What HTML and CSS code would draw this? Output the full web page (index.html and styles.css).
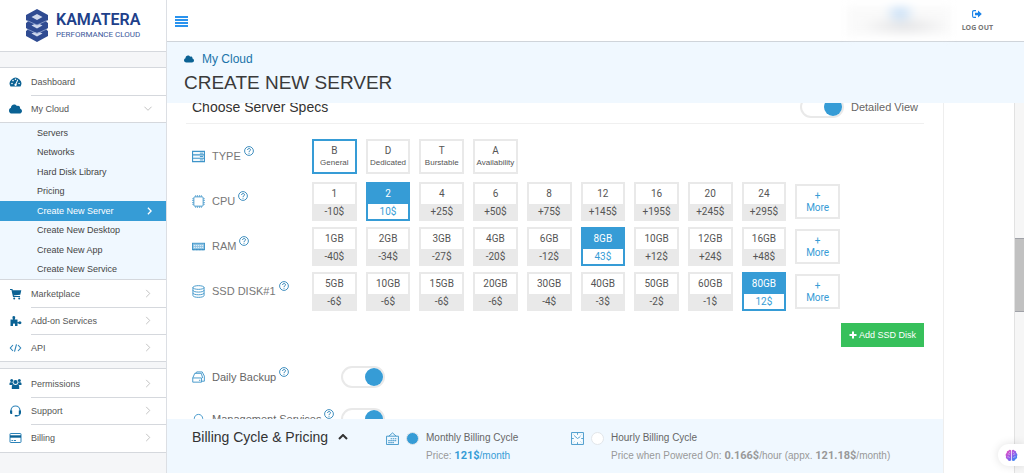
FILE: index.html
```html
<!DOCTYPE html>
<html lang="en">
<head>
<meta charset="utf-8">
<title>Create New Server</title>
<link rel="stylesheet" href="styles.css">
</head>
<body>
<svg class="sprite" aria-hidden="true">
  <symbol id="cloud" viewBox="0 0 640 512"><path fill="currentColor" d="M537.6 226.6c4.1-10.7 6.4-22.4 6.4-34.6 0-53-43-96-96-96-19.7 0-38.1 6-53.3 16.2C367 64.2 315.3 32 256 32c-88.4 0-160 71.6-160 160 0 2.7.1 5.4.2 8.1C40.2 219.8 0 273.2 0 336c0 79.5 64.5 144 144 144h368c70.7 0 128-57.3 128-128 0-61.9-44-113.6-102.4-125.4z"/></symbol>
  <symbol id="chev" viewBox="0 0 6 10"><path d="M1 1l4 4-4 4" fill="none" stroke="currentColor"/></symbol>
  <symbol id="help" viewBox="0 0 10 10"><circle cx="5" cy="5" r="4.4" fill="none" stroke="currentColor" stroke-width=".9"/><path d="M3.600 4c0-2 2.900-1.900 2.900-.2 0 1.100-1.500 1-1.500 2.200M5 6.800v.9" fill="none" stroke="currentColor" stroke-width="1"/></symbol>
</svg>
<div class="app">
  <aside class="sidebar">
    <a class="logo" href="#">
      <svg class="logo-mark" viewBox="0 0 24 34" aria-hidden="true">
        <path d="M12 1l11 6v5l-2 1.500 2 1.500v5l-2 1.500 2 1.500v5l-11 6-11-6v-5l2-1.500-2-1.500v-5l2-1.500L1 12V7z" fill="#2f4b92"/>
        <path d="M6.500 9L12 6l5.500 3-5.500 3zM6.500 17.500l3-1.600 2.500 1.200 2.500-1.200 3 1.600-5.500 3zM6.500 25.500l3-1.600 2.500 1.200 2.500-1.200 3 1.600-5.500 3z" fill="#cfd8ec"/>
        <path d="M2 12.500l10 4.500 10-4.500M2 21l10 4.500L22 21" fill="none" stroke="#8fa3cf" stroke-width=".8"/>
      </svg>
      <span class="logo-text"><strong>KAMATERA</strong><span>PERFORMANCE CLOUD</span></span>
    </a>
    <nav class="menu">
      <a class="item" href="#"><svg class="ico" viewBox="0 0 12 12" aria-hidden="true"><path d="M1 10.500a5.800 5.800 0 1 1 10 0z" fill="#0b6294"/><g fill="#fff"><circle cx="2.500" cy="7.500" r=".8"/><circle cx="3.500" cy="4.600" r=".8"/><circle cx="6" cy="3.300" r=".8"/><circle cx="9.600" cy="7.500" r=".8"/><path d="M7.900 3.600l.8.400-1.700 4a1.200 1.200 0 1 1-.9-.4z"/></g></svg><span>Dashboard</span></a>
      <a class="item" href="#"><svg class="ico" aria-hidden="true"><use href="#cloud"/></svg><span>My Cloud</span><svg class="arrow down" aria-hidden="true"><use href="#chev"/></svg></a>
      <div class="sub">
        <a href="#">Servers</a>
        <a href="#">Networks</a>
        <a href="#">Hard Disk Library</a>
        <a href="#">Pricing</a>
        <a class="current" href="#" aria-current="page">Create New Server<svg class="sub-arrow" viewBox="0 0 6 10" aria-hidden="true"><path d="M1 1l4 4-4 4" fill="none" stroke="#fff" stroke-width="1.600"/></svg></a>
        <a href="#">Create New Desktop</a>
        <a href="#">Create New App</a>
        <a href="#">Create New Service</a>
      </div>
      <a class="item" href="#"><svg class="ico" viewBox="0 0 12 12" aria-hidden="true"><path d="M.5 1.500h2l1.500 7h6.500" fill="none" stroke="#0b6294" stroke-width="1.200"/><path d="M2.800 2.300h9l-1 4.400-7 .8z" fill="#0b6294"/><circle cx="4.700" cy="10.500" r="1" fill="#0b6294"/><circle cx="9.700" cy="10.500" r="1" fill="#0b6294"/></svg><span>Marketplace</span><svg class="arrow" aria-hidden="true"><use href="#chev"/></svg></a>
      <a class="item" href="#"><svg class="ico" viewBox="0 0 12 12" aria-hidden="true"><path d="M1 4.500h2.500C2.400 2 3 1 4.300 1s2 1 .9 3.500H8v2.700c1.200.2 1.200-1 2.400-1 2 0 2 3 0 3-1.200 0-1.200-1-2.400-.8v2.600H5.500C5.800 9 5.300 8.500 4.500 8.500S3.300 9 3.500 11H1z" fill="#0b6294"/></svg><span>Add-on Services</span><svg class="arrow" aria-hidden="true"><use href="#chev"/></svg></a>
      <a class="item" href="#"><svg class="ico" viewBox="0 0 12 12" aria-hidden="true"><path d="M3.500 3L.8 6l2.700 3M8.500 3l2.700 3-2.700 3M7 2.300L5 9.700" fill="none" stroke="#2b82b8" stroke-width="1.100"/></svg><span>API</span><svg class="arrow" aria-hidden="true"><use href="#chev"/></svg></a>
    </nav>
    <nav class="menu second">
      <a class="item" href="#"><svg class="ico" viewBox="0 0 12 12" aria-hidden="true"><g fill="#0b6294"><circle cx="2.200" cy="2.500" r="1.500"/><circle cx="9.800" cy="2.500" r="1.500"/><circle cx="6" cy="4" r="2.100"/><path d="M0 7V5.500c0-1 1-1.300 3.200-1.100.2 1 .7 1.500.9 2L2 7zM12 7V5.500c0-1-1-1.300-3.200-1.100-.2 1-.7 1.500-.9 2L10 7zM2.300 11V8.500c0-1.500 1-2 2-2l1.700.6 1.700-.6c1 0 2 .5 2 2V11z"/></g></svg><span>Permissions</span><svg class="arrow" aria-hidden="true"><use href="#chev"/></svg></a>
      <a class="item" href="#"><svg class="ico" viewBox="0 0 12 12" aria-hidden="true"><path d="M1.500 6.500V5.500a4.500 4.500 0 0 1 9 0v3q0 2-3 2.300" fill="none" stroke="#2b82b8" stroke-width="1.200"/><path d="M.5 5.500h2.200V9H1.600Q.5 9 .5 7.500zM11.500 5.500H9.300V9h1.100q1.100 0 1.100-1.500zM5.300 10h2.400v1.600H5.300z" fill="#0b6294"/></svg><span>Support</span><svg class="arrow" aria-hidden="true"><use href="#chev"/></svg></a>
      <a class="item" href="#"><svg class="ico" viewBox="0 0 12 12" aria-hidden="true"><rect x=".5" y="1.500" width="11" height="9" rx=".6" fill="#fff" stroke="#2b82b8"/><path d="M.5 3.300h11v2.400H.5z" fill="#0b6294"/><path d="M2 8.500h1.400M4.300 8.500h2.200" stroke="#2b82b8"/></svg><span>Billing</span><svg class="arrow" aria-hidden="true"><use href="#chev"/></svg></a>
    </nav>
  </aside>

  <div class="main">
    <header class="topbar">
      <button class="burger" type="button" aria-label="Toggle menu"><i></i><i></i><i></i><i></i></button>
      <div class="account" aria-hidden="true"></div>
      <a class="logout" href="#"><svg viewBox="0 0 10 8" aria-hidden="true"><path d="M4 .6H2Q.6.600.6 2v4Q.6 7.400 2 7.400h2" fill="none" stroke="currentColor" stroke-width="1.100"/><path d="M3 2.700h3V.6L9.800 4 6 7.400V5.300H3z" fill="currentColor"/></svg><span>LOG OUT</span></a>
    </header>
    <div class="heading">
      <a class="crumb" href="#"><svg aria-hidden="true"><use href="#cloud"/></svg>My Cloud</a>
      <h1>CREATE NEW SERVER</h1>
    </div>
    <div class="scroller">
      <div class="column">
        <div class="view">
          <form class="panel">
            <div class="panel-head">
              <h2>Choose Server Specs</h2>
              <label class="detail"><input class="switch" type="checkbox" checked>Detailed View</label>
            </div>
            <div class="spec type">
              <div class="spec-name"><svg class="sico" viewBox="0 0 14 14" aria-hidden="true"><path d="M.6 1.500h12.800v11H.6zM.6 5.200h12.800M.6 8.900h12.800" fill="#f3f9fd" stroke="#3f95c9" stroke-width="1.200"/><path d="M8.500 3.400h3.500M8.500 7h3.500M8.500 10.700h3.500" stroke="#3f95c9"/></svg><span>TYPE</span><svg class="help" aria-hidden="true"><use href="#help"/></svg></div>
              <div class="options">
                <button class="kind on" type="button" aria-pressed="true"><b>B</b><small>General</small></button>
                <button class="kind" type="button"><b>D</b><small>Dedicated</small></button>
                <button class="kind" type="button"><b>T</b><small>Burstable</small></button>
                <button class="kind" type="button"><b>A</b><small>Availability</small></button>
              </div>
            </div>
            <div class="spec">
              <div class="spec-name"><svg class="sico" viewBox="0 0 14 14" aria-hidden="true"><rect x="2" y="2" width="10" height="10" rx="1" fill="none" stroke="#3f95c9"/><path d="M3.500 1h7M3.500 13h7M1 3.500v7M13 3.500v7" stroke="#3f95c9" stroke-width="1.200" stroke-dasharray="1 1"/></svg><span>CPU</span><svg class="help" aria-hidden="true"><use href="#help"/></svg></div>
              <div class="options">
                <button class="opt" type="button"><b>1</b><span>-10$</span></button>
                <button class="opt on" type="button" aria-pressed="true"><b>2</b><span>10$</span></button>
                <button class="opt" type="button"><b>4</b><span>+25$</span></button>
                <button class="opt" type="button"><b>6</b><span>+50$</span></button>
                <button class="opt" type="button"><b>8</b><span>+75$</span></button>
                <button class="opt" type="button"><b>12</b><span>+145$</span></button>
                <button class="opt" type="button"><b>16</b><span>+195$</span></button>
                <button class="opt" type="button"><b>20</b><span>+245$</span></button>
                <button class="opt" type="button"><b>24</b><span>+295$</span></button>
                <button class="kind more" type="button"><b>+</b><b>More</b></button>
              </div>
            </div>
            <div class="spec">
              <div class="spec-name"><svg class="sico" viewBox="0 0 14 14" aria-hidden="true"><rect x=".5" y="3.500" width="13" height="7" fill="#8fc3e3" stroke="#3f95c9"/><path d="M2 6h10M2 8h10" stroke="#fff" stroke-width=".8" stroke-dasharray="1.400 .8"/><path d="M1 10.500h12" stroke="#2b82b8" stroke-width="1.200" stroke-dasharray="1 .6"/></svg><span>RAM</span><svg class="help" aria-hidden="true"><use href="#help"/></svg></div>
              <div class="options">
                <button class="opt" type="button"><b>1GB</b><span>-40$</span></button>
                <button class="opt" type="button"><b>2GB</b><span>-34$</span></button>
                <button class="opt" type="button"><b>3GB</b><span>-27$</span></button>
                <button class="opt" type="button"><b>4GB</b><span>-20$</span></button>
                <button class="opt" type="button"><b>6GB</b><span>-12$</span></button>
                <button class="opt on" type="button" aria-pressed="true"><b>8GB</b><span>43$</span></button>
                <button class="opt" type="button"><b>10GB</b><span>+12$</span></button>
                <button class="opt" type="button"><b>12GB</b><span>+24$</span></button>
                <button class="opt" type="button"><b>16GB</b><span>+48$</span></button>
                <button class="kind more" type="button"><b>+</b><b>More</b></button>
              </div>
            </div>
            <div class="spec">
              <div class="spec-name"><svg class="sico" viewBox="0 0 14 14" aria-hidden="true"><g fill="none" stroke="#3f95c9"><ellipse cx="7" cy="2.700" rx="6" ry="2"/><path d="M1 2.700v8.600c0 2.700 12 2.700 12 0V2.700M1 5.600c0 2.700 12 2.700 12 0M1 8.500c0 2.700 12 2.700 12 0"/></g></svg><span>SSD DISK#1</span><svg class="help" aria-hidden="true"><use href="#help"/></svg></div>
              <div class="options">
                <button class="opt" type="button"><b>5GB</b><span>-6$</span></button>
                <button class="opt" type="button"><b>10GB</b><span>-6$</span></button>
                <button class="opt" type="button"><b>15GB</b><span>-6$</span></button>
                <button class="opt" type="button"><b>20GB</b><span>-6$</span></button>
                <button class="opt" type="button"><b>30GB</b><span>-4$</span></button>
                <button class="opt" type="button"><b>40GB</b><span>-3$</span></button>
                <button class="opt" type="button"><b>50GB</b><span>-2$</span></button>
                <button class="opt" type="button"><b>60GB</b><span>-1$</span></button>
                <button class="opt on" type="button" aria-pressed="true"><b>80GB</b><span>12$</span></button>
                <button class="kind more" type="button"><b>+</b><b>More</b></button>
              </div>
            </div>
            <div class="actions"><button class="add" type="button"><svg viewBox="0 0 8 8" aria-hidden="true"><path d="M4 .5v7M.5 4h7" stroke="#fff" stroke-width="2"/></svg>Add SSD Disk</button></div>
            <div class="extra">
              <label class="spec-name" for="backup"><svg class="sico" viewBox="0 0 14 14" aria-hidden="true"><g fill="none" stroke="#3f95c9"><path d="M.8 7.500L3 2.500h7l1.500 5M.8 7.500h9.500v4.500H.8zM4 2.500L5 1h6l2.300 4.500V11H10.500"/><path d="M7.500 10h1.500"/></g></svg><span>Daily Backup</span><svg class="help" aria-hidden="true"><use href="#help"/></svg></label>
              <input class="switch" id="backup" type="checkbox" checked>
            </div>
            <div class="extra">
              <label class="spec-name" for="managed"><svg class="sico" viewBox="0 0 14 14" aria-hidden="true"><path d="M2.500 9V6a4.500 4.500 0 0 1 9 0v3M1 7h2.500v4H1zM10.500 7H13v4h-2.500z" fill="none" stroke="#3f95c9"/></svg><span>Management Services</span><svg class="help" aria-hidden="true"><use href="#help"/></svg></label>
              <input class="switch" id="managed" type="checkbox" checked>
            </div>
          </form>
        </div>
        <footer class="billing">
          <h2>Billing Cycle &amp; Pricing <svg viewBox="0 0 10 6" aria-hidden="true"><path d="M1 5l4-4 4 4" fill="none" stroke="#333" stroke-width="2"/></svg></h2>
          <div class="cycle">
            <svg class="bico" viewBox="0 0 14 14" aria-hidden="true"><path d="M.6 4.500h12.800v9H.6zM3 4.500L7 1l4 3.500" fill="none" stroke="#3f95c9"/><path d="M5 7.200h7M2.500 9.300h9M2.500 11.400h6" stroke="#3f95c9" stroke-width="1.200" stroke-dasharray="1.500 .7"/></svg>
            <input type="radio" name="cycle" id="monthly" checked>
            <label for="monthly">Monthly Billing Cycle</label>
            <p class="blue"><span>Price: </span><b>121$</b>/month</p>
          </div>
          <div class="cycle">
            <svg class="bico" viewBox="0 0 14 14" aria-hidden="true"><path d="M.6.600h12.800v12.800H.6z" fill="#f8fcff" stroke="#3f95c9"/><path d="M7 1v2M7 11v2M1 7h2M11 7h2M3.500 4L7 7l3-2" fill="none" stroke="#3f95c9" stroke-width=".9"/><path d="M3 3l.5.500M11 3l-.5.500M3 11l.5-.5M11 11l-.5-.5" stroke="#3f95c9"/></svg>
            <input type="radio" name="cycle" id="hourly">
            <label for="hourly">Hourly Billing Cycle</label>
            <p>Price when Powered On: <b>0.166$</b>/hour (appx. <b>121.18$</b>/month)</p>
          </div>
        </footer>
      </div>
      <div class="track" aria-hidden="true"><div class="thumb"></div></div>
    </div>
  </div>
</div>
<button class="assistant" type="button" aria-label="Assistant">
  <svg viewBox="0 0 14 14" aria-hidden="true"><defs><linearGradient id="brain" x1="0" y1="0" x2="1" y2="1"><stop offset=".1" stop-color="#e24fc0"/><stop offset=".5" stop-color="#9a5ae8"/><stop offset=".9" stop-color="#2f8df5"/></linearGradient></defs><path fill="url(#brain)" d="M6.600 1.500C6 .4 4.200.5 3.700 1.900 2.200 2 1.600 3.400 2 4.400.6 5 .3 6.700 1.100 7.700c-.6 1.400.2 2.800 1.500 3 .2 1.900 3 2.900 4 1.300zM7.400 1.500C8 .4 9.800.5 10.300 1.900c1.500.1 2.100 1.500 1.700 2.500 1.400.6 1.700 2.300.9 3.300.6 1.400-.2 2.800-1.500 3-.2 1.900-3 2.900-4 1.300z"/><path d="M3 5.500q1.500-.8 2 .8M2.500 8.500q2-.5 2.500 1M11 5.500q-1.500-.8-2 .8M11.500 8.500q-2-.5-2.500 1M5 3v1.500M9 3v1.500" fill="none" stroke="#fff" stroke-width=".6" opacity=".8"/></svg>
</button>
</body>
</html>
```
FILE: styles.css
```css
* { box-sizing: border-box; }
body { margin: 0; background: #fff; color: #555; font: 12px/16px "Liberation Sans", Arial, sans-serif; }
a { color: inherit; text-decoration: none; }
button { font: inherit; color: inherit; padding: 0; margin: 0; background: #fff; border: 0; cursor: pointer; }
h1, h2, p { margin: 0; font-weight: 400; }
b { font-weight: 400; }
svg { display: block; flex: none; }
.sprite { position: absolute; width: 0; height: 0; }

.app { display: flex; height: 100vh; overflow: hidden; }

/* Sidebar */
.sidebar { flex: none; width: 167px; background: #f5f6f8; border-right: 1px solid #dcdfe4; font-size: 9px; line-height: 12px; overflow: hidden; }
.logo { display: flex; align-items: center; gap: 7px; height: 52px; padding: 0 0 1px 25px; background: #fff; border-bottom: 1px solid #d5d8dd; color: #20408a; font-family: Roboto, sans-serif; }
.logo-mark { width: 24px; height: 34px; }
.logo-text { display: grid; gap: 2px; }
.logo-text strong { font-size: 16px; line-height: 16px; font-weight: 600; }
.logo-text span { font-size: 8px; line-height: 9px; color: #3c589b; }
.menu { margin-top: 15px; background: #fff; border: solid #d5d8dd; border-width: 1px 0; }
.menu.second { margin-top: 6px; padding: 1px 0; }
.item { display: flex; align-items: center; height: 27px; padding: 0 12px 0 9px; position: relative; }
.item + .item::before { content: ""; position: absolute; top: 0; left: 31px; right: 0; border-top: 1px solid #d5d8dd; }
.item span { flex: 1; margin-left: 9px; }
.ico { width: 13px; height: 12px; color: #0b6294; }
.arrow { width: 6px; height: 9px; margin-right: 3px; color: #bbb; }
.arrow.down { transform: rotate(90deg); }
.sub { display: grid; grid-auto-rows: 1fr; min-height: 158px; background: #f0f8ff; border: solid #d5d8dd; border-width: 1px 0; color: #444; }
.sub a { display: flex; align-items: center; padding-left: 37px; }
.sub .current { justify-content: space-between; padding-right: 14px; background: #369cd6; color: #fff; }
.sub-arrow { width: 5px; height: 8px; }

/* Header */
.main { flex: 1; min-width: 0; display: flex; flex-direction: column; }
.topbar { display: flex; align-items: center; height: 42px; padding: 0 31px 0 8px; border-bottom: 1px solid #cfd4da; }
.burger { display: grid; gap: 1px; width: 13px; margin-top: 2px; }
.burger i { height: 2px; background: #2a93ee; }
.account { width: 104px; height: 30px; margin: 0 11px 0 auto; filter: blur(4px); background: radial-gradient(ellipse 16px 12px at 51% 22%, #c3ddf7, transparent), radial-gradient(ellipse 46px 10px at 55% 66%, #e2e2e4, transparent), #fafafa; }
.logout { display: grid; justify-items: center; gap: 5px; font: 700 7px/9px "Open Sans", sans-serif; color: #777; }
.logout svg { width: 10px; height: 8px; color: #1a82e8; }
.heading { height: 61px; padding: 9px 17px; background: #f0f8ff; }
.crumb { display: flex; align-items: center; gap: 8px; color: #1a74aa; }
.crumb svg { width: 10px; height: 8px; color: #0b6294; }
.heading h1 { margin-top: 5px; font-size: 19px; line-height: 22px; color: #3a3a3a; }

/* Scrolling area */
.scroller { flex: 1; min-height: 0; display: flex; }
.column { flex: 1; min-width: 0; margin-right: 70px; display: flex; flex-direction: column; border-right: 1px solid #eee; }
.view { flex: 1; min-height: 0; overflow: hidden; }
.panel { margin-top: -8px; padding: 0 19px; }
.panel-head { display: flex; justify-content: space-between; align-items: center; height: 29px; padding: 0 6px 5px 6px; border-bottom: 1px solid #f0f0f0; }
h2 { font-size: 14px; line-height: 18px; color: #333; }
.detail { display: flex; align-items: center; gap: 7px; font-size: 11px; color: #666; }
.switch { appearance: none; flex: none; display: flex; justify-content: flex-end; width: 44px; height: 22px; margin: 0; border: 2px solid #e9e9e9; border-radius: 11px; background: #fff; }
.switch::before { content: ""; width: 18px; height: 18px; border-radius: 50%; background: #369cd6; }
.spec { display: flex; align-items: center; margin: 6px 84px 0 6px; height: 39px; }
.spec.type { height: 35px; margin: 15px 84px 8px 6px; }
.spec.type + .spec { margin-top: 0; }
.spec-name { display: flex; align-items: center; flex: none; width: 120px; font-size: 11px; color: #777; }
.spec .spec-name { padding-bottom: 1px; }
.sico { width: 13px; height: 13px; margin-right: 7px; }
.help { width: 10px; height: 10px; margin: 0 0 10px 3px; color: #2b82b8; }
.options { flex: 1; display: grid; grid-template-columns: repeat(10, minmax(0, 1fr)); gap: 9px; align-items: center; font: 10px/12px Roboto, sans-serif; color: #555; }
.opt { display: grid; grid-template-rows: 20px 15px; align-items: center; border: 2px solid #e9e9e9; height: 39px; }
.opt span { line-height: 15px; background: #e9e9e9; }
.opt.on { border-color: #369cd6; color: #369cd6; }
.opt.on b { background: #369cd6; color: #fff; line-height: 20px; }
.opt.on span { background: #fff; }
.kind { display: grid; align-content: center; height: 35px; border: 2px solid #e9e9e9; }
.kind.on { border-color: #369cd6; }
.kind small { font: 8px/11px "Liberation Sans", Arial, sans-serif; }
.more { color: #369cd6; }
.actions { display: flex; justify-content: flex-end; margin-top: 12px; }
.add { display: flex; align-items: center; gap: 2px; height: 24px; padding: 0 8px; background: #37c05b; color: #fff; font-size: 9px; }
.add svg { width: 8px; height: 8px; }
.extra { display: flex; align-items: center; height: 22px; margin: 19px 6px 0; }
.extra .spec-name { width: 149px; color: #666; }
.extra .spec-name span { white-space: nowrap; }
.actions + .extra { margin-bottom: 20px; }

/* Billing bar */
.billing { display: flex; align-items: flex-start; height: 54px; padding: 9px 25px 0; background: #f0f8ff; }
.billing h2 { flex: none; display: flex; align-items: center; gap: 10px; width: 194px; }
.billing h2 svg { width: 10px; height: 6px; }
.cycle { display: grid; grid-template-columns: 13px 13px auto; column-gap: 7px; row-gap: 2px; align-items: center; width: 185px; margin-top: 2px; font-size: 10px; line-height: 16px; white-space: nowrap; color: #666; }
.bico { width: 13px; height: 13px; }
.cycle input { appearance: none; width: 13px; height: 13px; margin: 0; border: 1px solid #e2e6ea; border-radius: 50%; background: #fff; }
.cycle input:checked { background: #369cd6; }
.cycle p { grid-column: 3; color: #999; }
.cycle p b { font: 700 11px/16px Roboto, sans-serif; }
.cycle .blue { color: #369cd6; }
.cycle .blue span { color: #999; }

/* Scrollbar and assistant */
.track { flex: none; width: 10px; padding-top: 135px; background: #f6f6f6; border-left: 1px solid #e2e2e2; }
.thumb { height: 74px; background: #c1c1c1; border: solid #a0a2a8; border-width: 1px 0; }
.assistant { position: fixed; right: 0; bottom: 7px; width: 26px; height: 22px; padding-left: 7px; border-radius: 11px 0 0 11px; box-shadow: 0 0 10px rgba(0, 0, 0, .12); }
.assistant svg { width: 13px; height: 13px; }
```
